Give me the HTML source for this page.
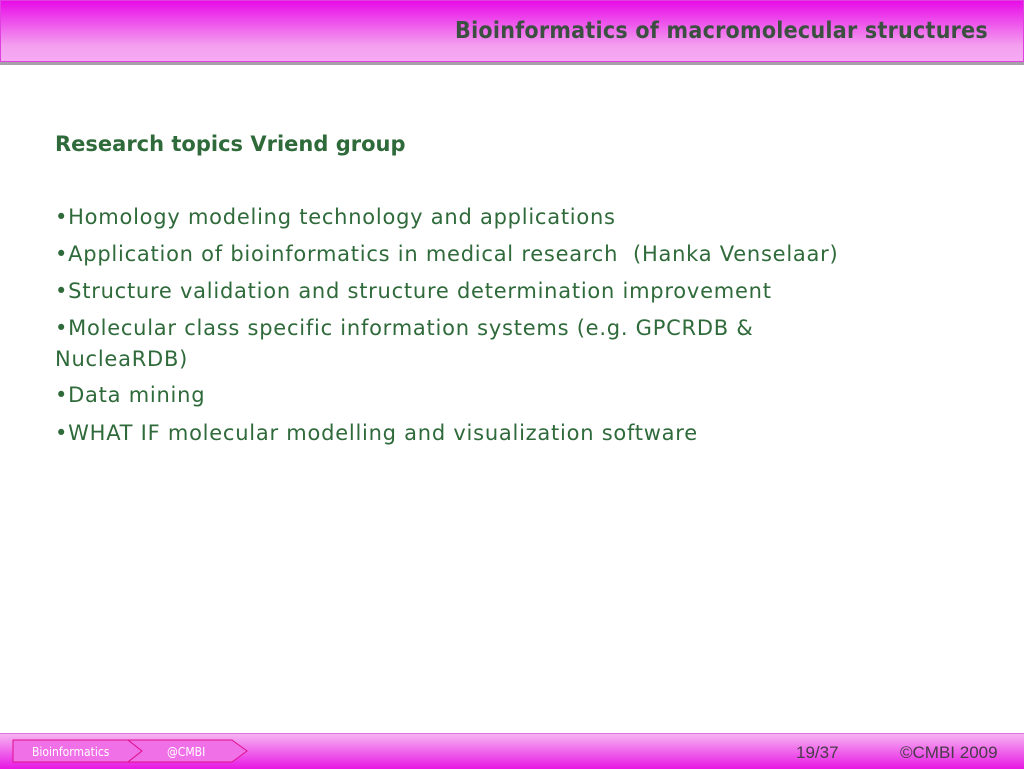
<!DOCTYPE html>
<html><head><style>
body{margin:0;width:1024px;height:768px;position:relative;background:#fff;font-family:"DejaVu Sans","Liberation Sans",sans-serif;overflow:hidden}
.hd{position:absolute;left:0;top:0;width:1022px;height:60px;border:1px solid #e040e0;background:linear-gradient(#e80ce8,#f4a0f0 75%,#f6aaf2);}
.hl{position:absolute;left:0;top:62px;width:1024px;height:3px;background:#a8a0a8}
.ht{position:absolute;right:36px;top:18px;font-size:23px;color:#3b5040;font-family:"DejaVu Sans Condensed",sans-serif;font-weight:bold;letter-spacing:0.25px}
.c{position:absolute;left:55px;color:#2f6a3a;font-size:21px;letter-spacing:0.75px;white-space:nowrap}
.ft{position:absolute;left:0;top:733px;width:1024px;height:35px;background:linear-gradient(#f6b4f2,#e818e4);border-top:1px solid #e070e0}
.ft span{position:absolute;font-family:"Liberation Sans",sans-serif;color:#4a3a4a;font-size:17px;top:9px}
</style></head><body>
<div class="hd"></div><div class="hl"></div>
<div class="ht">Bioinformatics of macromolecular structures</div>
<div class="c" style="top:132px;font-weight:bold;letter-spacing:0">Research topics Vriend group</div>
<div class="c" style="top:205px">•Homology modeling technology and applications</div>
<div class="c" style="top:242px">•Application of bioinformatics in medical research&nbsp; (Hanka Venselaar)</div>
<div class="c" style="top:279px">•Structure validation and structure determination improvement</div>
<div class="c" style="top:316px">•Molecular class specific information systems (e.g. GPCRDB &amp;</div>
<div class="c" style="top:347px">NucleaRDB)</div>
<div class="c" style="top:383px">•Data mining</div>
<div class="c" style="top:421px">•WHAT IF molecular modelling and visualization software</div>
<div class="ft">
<svg width="260" height="35" style="position:absolute;left:0;top:0">
<polygon points="13,6 128,6 142,17 128,28 13,28" fill="#f070e8" stroke="#e0108c" stroke-width="1"/>
<polygon points="128,6 232,6 247,17 232,28 128,28 142,17" fill="#f070e8" stroke="#e0108c" stroke-width="1"/>
<text x="32" y="22" font-size="12" fill="#fff" font-family="DejaVu Sans Condensed,sans-serif">Bioinformatics</text>
<text x="167" y="22" font-size="12" fill="#fff" font-family="DejaVu Sans Condensed,sans-serif">@CMBI</text>
</svg>
<span style="left:796px">19/37</span><span style="left:900px">©CMBI 2009</span>
</div>
</body></html>
